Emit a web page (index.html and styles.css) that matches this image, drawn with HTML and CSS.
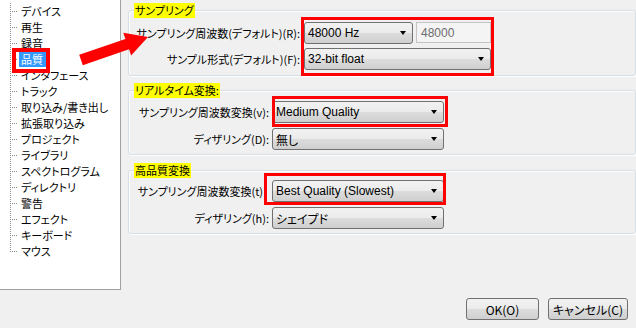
FILE: index.html
```html
<!DOCTYPE html>
<html lang="ja">
<head>
<meta charset="utf-8">
<title>設定 - 品質</title>
<link rel="stylesheet" href="styles.css">
</head>
<body>
<div class="dialog">
  <div class="main">
    <nav class="tree">
      <ul>
        <li><span class="twig"></span><span class="label">デバイス</span></li>
        <li><span class="twig"></span><span class="label">再生</span></li>
        <li><span class="twig"></span><span class="label">録音</span></li>
        <li class="sel"><span class="twig"></span><span class="label">品質</span></li>
        <li><span class="twig"></span><span class="label">インタフェース</span></li>
        <li><span class="twig"></span><span class="label">トラック</span></li>
        <li><span class="twig"></span><span class="label">取り込み/書き出し</span></li>
        <li><span class="twig"></span><span class="label">拡張取り込み</span></li>
        <li><span class="twig"></span><span class="label">プロジェクト</span></li>
        <li><span class="twig"></span><span class="label">ライブラリ</span></li>
        <li><span class="twig"></span><span class="label">スペクトログラム</span></li>
        <li><span class="twig"></span><span class="label">ディレクトリ</span></li>
        <li><span class="twig"></span><span class="label">警告</span></li>
        <li><span class="twig"></span><span class="label">エフェクト</span></li>
        <li><span class="twig"></span><span class="label">キーボード</span></li>
        <li class="last"><span class="twig"></span><span class="label">マウス</span></li>
      </ul>
    </nav>
    <div class="pane">
      <section class="group g1">
        <div class="title">サンプリング</div>
        <div class="rows">
          <span class="lbl c1 r1">サンプリング周波数(デフォルト)(R):</span>
          <div class="line c2 r1">
            <div class="combo w109"><span>48000 Hz</span><i class="caret"></i></div>
            <div class="field">48000</div>
          </div>
          <span class="lbl c1 r2">サンプル形式(デフォルト)(F):</span>
          <div class="combo c2 r2"><span>32-bit float</span><i class="caret"></i></div>
          <div class="mark m1"></div>
        </div>
      </section>
      <section class="group g2">
        <div class="title">リアルタイム変換:</div>
        <div class="rows">
          <span class="lbl c1 r1">サンプリング周波数変換(v):</span>
          <div class="combo c2 r1"><span>Medium Quality</span><i class="caret"></i></div>
          <span class="lbl c1 r2">ディザリング(D):</span>
          <div class="combo c2 r2"><span>無し</span><i class="caret"></i></div>
          <div class="mark m2"></div>
        </div>
      </section>
      <section class="group g3">
        <div class="title">高品質変換</div>
        <div class="rows">
          <span class="lbl c1 r1 nocolon">サンプリング周波数変換(t)</span>
          <div class="combo c2 r1"><span>Best Quality (Slowest)</span><i class="caret"></i></div>
          <span class="lbl c1 r2">ディザリング(h):</span>
          <div class="combo c2 r2"><span>シェイプド</span><i class="caret"></i></div>
          <div class="mark m3"></div>
        </div>
      </section>
    </div>
  </div>
  <div class="footer">
    <button class="btn ok">OK(O)</button>
    <button class="btn cancel">キャンセル(C)</button>
  </div>
  <svg class="arrow" width="636" height="328" viewBox="0 0 636 328" aria-hidden="true">
    <polygon points="79.2,54.8 125.4,38.9 123.3,32.8 148,37 131.1,55.4 129,49.3 82.8,65.2" fill="#ff0000"/>
  </svg>
</div>
</body>
</html>
```

FILE: styles.css
```css
* { box-sizing: border-box; }
html, body { margin: 0; padding: 0; }
body {
  width: 636px;
  height: 328px;
  overflow: hidden;
  background: #f0f0f0;
  font-family: "Noto Sans CJK JP", sans-serif;
  font-size: 11px;
  color: #000;
  font-feature-settings: "palt";
}
.dialog { position: relative; width: 636px; height: 328px; }
.main { display: flex; height: 290px; }

/* tree */
.tree {
  width: 121px;
  height: 290px;
  flex: none;
  background: #fff;
  border-right: 1px solid #a0a0a0;
  border-bottom: 1px solid #a0a0a0;
}
.tree ul { list-style: none; margin: 0; padding: 3px 0 0 0; }
.tree li {
  display: flex;
  align-items: center;
  height: 16px;
  background: repeating-linear-gradient(to bottom, #8c8c8c 0 1px, transparent 1px 2px) 10px 0 / 1px 100% no-repeat;
}
.tree li.last { background-size: 1px 8px; }
.twig {
  flex: none;
  width: 8px;
  height: 1px;
  margin-left: 10px;
  background: repeating-linear-gradient(to right, #8c8c8c 0 1px, transparent 1px 2px);
}
.label { margin-left: 1px; padding: 0 2px; line-height: 15px; white-space: nowrap; }
.sel .label { background: #3399ff; color: #fff; position: relative; padding: 0 3px 0 2px; }
.sel .label::after {
  content: "";
  position: absolute;
  left: -7px; right: -4px; top: -4px; bottom: -6px;
  border: 4px solid #ff0000;
}

/* right pane */
.pane { flex: 1; padding: 10px 0 0 7px; display: flex; flex-direction: column; }
.group {
  border: 1px solid #d5dfe5;
  border-radius: 3px;
  box-shadow: inset 1px 1px 0 #fff, 1px 1px 0 #fff;
}
.g2 { margin-top: 14px; }
.g3 { margin-top: 15px; }
.title {
  width: fit-content;
  height: 15px;
  line-height: 15px;
  margin: -8px 0 0 5px;
  padding: 0 1px;
  background: #ffff00;
  white-space: nowrap;
}
.rows { display: grid; grid-template-rows: 22px 22px; }
.g1 .rows { grid-template-columns: 171px 187px; column-gap: 4px; row-gap: 4px; margin-top: 4px; padding-bottom: 5px; }
.g2 .rows, .g3 .rows { grid-template-columns: 140px 172px; column-gap: 3px; row-gap: 5px; padding-bottom: 4px; }
.g2 .rows { margin-top: 3px; }
.g3 .rows { margin-top: 2px; }
.c1 { grid-column: 1; }
.c2 { grid-column: 2; }
.r1 { grid-row: 1; }
.r2 { grid-row: 2; }
.lbl { align-self: center; justify-self: end; text-align: right; white-space: nowrap; line-height: 15px; }
.lbl.nocolon { margin-right: 6px; }

.line { display: flex; gap: 3px; }
.combo {
  height: 22px;
  display: flex;
  align-items: center;
  justify-content: space-between;
  padding: 0 6px 0 3px;
  border: 1px solid #707070;
  border-radius: 3px;
  background: linear-gradient(to bottom, #f2f2f2 0%, #ebebeb 50%, #dddddd 50%, #cfcfcf 100%);
  font-family: "Liberation Sans", "Noto Sans CJK JP", sans-serif;
  font-size: 12px;
  white-space: nowrap;
}
.w109 { width: 109px; }
.caret {
  width: 0; height: 0;
  border-left: 3.5px solid transparent;
  border-right: 3.5px solid transparent;
  border-top: 4px solid #000;
}
.field {
  width: 75px;
  height: 21px;
  display: flex;
  align-items: center;
  padding-left: 4px;
  border: 1px solid #c4c4c4;
  background: #f4f4f4;
  color: #6d6d6d;
  font-family: "Liberation Sans", sans-serif;
  font-size: 12px;
}

/* red annotation boxes drawn over the controls */
.mark { pointer-events: none; border: 3px solid #ff0000; grid-column: 2; }
.m1 { grid-row: 1 / span 2; margin: -5px -3px -6px -3px; }
.m2 { grid-row: 1; margin: -5px -4px -4px 0; }
.m3 { grid-row: 1; margin: -7px -2px -3px -8px; }

/* footer */
.footer { display: flex; justify-content: flex-end; gap: 9px; padding: 8px 8px 0 0; }
.btn {
  height: 22px;
  margin: 0;
  padding: 0;
  border: 1px solid #707070;
  border-radius: 3px;
  background: linear-gradient(to bottom, #f2f2f2 0%, #ebebeb 50%, #dddddd 50%, #cfcfcf 100%);
  font-family: "Noto Sans CJK JP", sans-serif;
  font-feature-settings: "palt";
  font-size: 12px;
  color: #000;
}
.ok { width: 73px; }
.cancel { width: 80px; }

.arrow { position: absolute; left: 0; top: 0; pointer-events: none; }
```
